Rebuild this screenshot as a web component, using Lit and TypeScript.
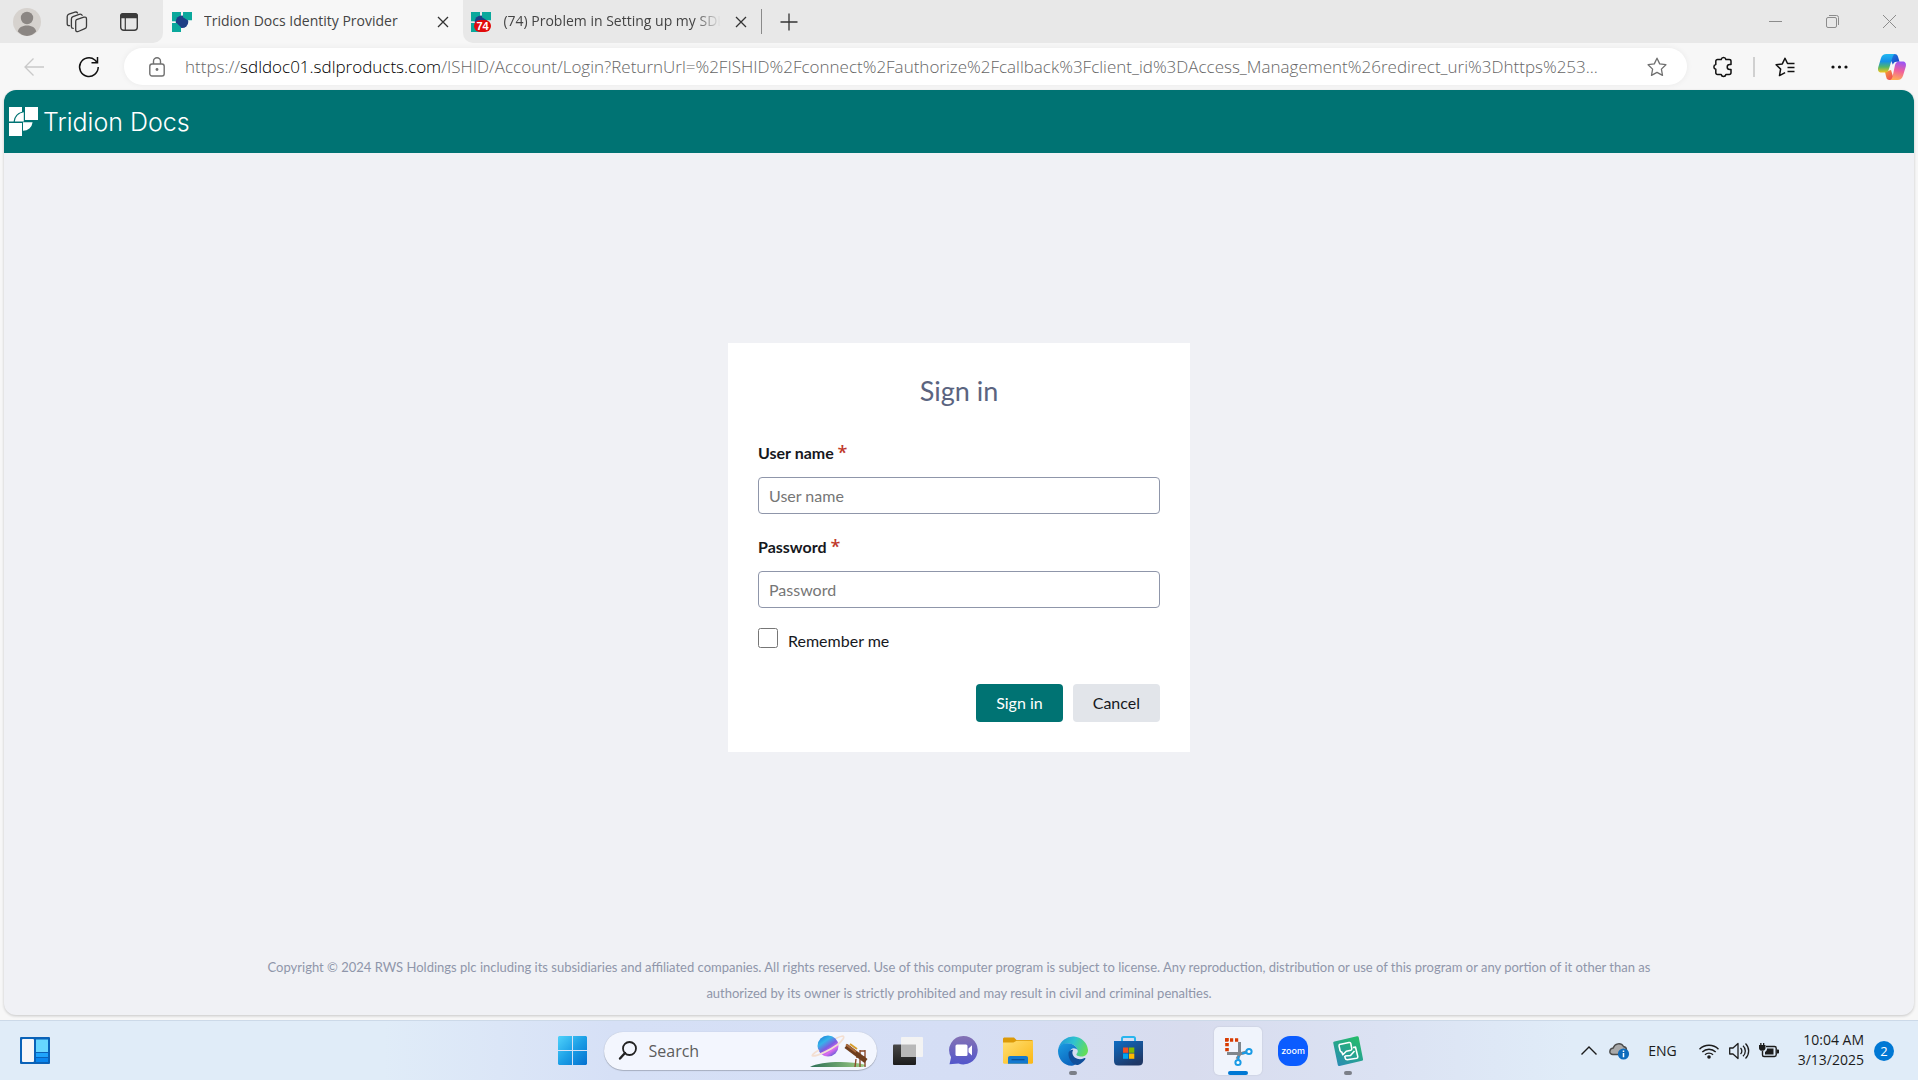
import { LitElement, html, css, svg } from "lit";
import { customElement, property } from "lit/decorators.js";

const favicon = svg`
  <path fill="#0aa89c" d="M0 0h9v9.300H0z"/>
  <circle cx="10" cy="9.700" r="6.300" fill="#1f3f86"/>
  <path fill="#0aa89c" d="M11 0h9v8.300h-4.200L11 5.200zM0 11h4.600L9 15.200V20H0z"/>`;

const icons: Record<string, { box: string; art: unknown }> = {
  avatar: {
    box: "0 0 28 28",
    art: svg`<circle cx="14" cy="14" r="14" fill="#d6d2ce"/><circle cx="14" cy="10" r="6.200" fill="#8b8683"/>
      <path fill="#8b8683" d="M4.800 23.500c.6-3.800 4.400-6 9.200-6s8.600 2.200 9.200 6A14 14 0 0 1 14 28a14 14 0 0 1-9.200-4.500z"/>`,
  },
  workspaces: {
    box: "0 0 22 22",
    art: svg`<g fill="none" stroke="#3b3b3b" stroke-width="1.300" stroke-linejoin="round" stroke-linecap="round">
      <path d="M10.500 8.700l7.300-2.500c1.600-.5 2.700.2 2.700 1.700v7.300c0 1.200-.5 2-1.700 2.500l-6.600 2.800c-1.500.5-2.500-.2-2.500-1.600v-8.100c0-1.100 0-1.700.8-2.100z"/>
      <path d="M7.200 17.400c-1.200 0-1.800-.6-1.800-1.700V8c0-1.200.5-2 1.600-2.400l6.200-2.200c1.400-.5 2.400-.1 2.900.9"/>
      <path d="M3.600 14.700C2.100 14.700 1.200 14 1.200 12.700V5.600c0-1.200.6-2 1.700-2.400l6-2c1.200-.4 2.200 0 2.700.8"/></g>`,
  },
  tabActions: {
    box: "0 0 18 18",
    art: svg`<rect x=".7" y=".7" width="16.600" height="16.600" rx="3" fill="none" stroke="#3b3b3b" stroke-width="1.400"/>
      <path fill="#3b3b3b" d="M3 0h12a3 3 0 0 1 3 3v2.200H0V3a3 3 0 0 1 3-3z"/><path d="M5.300 5v12.500" stroke="#3b3b3b" stroke-width="1.200"/>`,
  },
  favicon: { box: "0 0 20 20", art: favicon },
  close: { box: "0 0 10 10", art: svg`<path d="M0 0l10 10M10 0L0 10" stroke="#333" stroke-width="1.300"/>` },
  plus: { box: "0 0 18 18", art: svg`<path d="M9 .5v17M.5 9h17" stroke="#333" stroke-width="1.300"/>` },
  minimize: { box: "0 0 13 13", art: svg`<path d="M0 6.500h13" stroke="#8c8c8c"/>` },
  restore: {
    box: "0 0 13 13",
    art: svg`<g fill="none" stroke="#8c8c8c"><rect x=".5" y="2.500" width="10" height="10" rx="1.500"/><path d="M3 .5h7.500a2 2 0 0 1 2 2V10"/></g>`,
  },
  windowClose: { box: "0 0 13 13", art: svg`<path d="M0 0l13 13M13 0L0 13" stroke="#8c8c8c"/>` },
  back: {
    box: "0 0 20 18",
    art: svg`<path d="M20 9H1M9.500.5L1 9l8.500 8.500" fill="none" stroke="#c9c9c9" stroke-width="1.300"/>`,
  },
  refresh: {
    box: "0 0 20 20",
    art: svg`<path d="M19.200 10a9.300 9.300 0 1 1-3.300-7l2.300 2.500M18.500 0v5.700h-6" fill="none" stroke="#111" stroke-width="1.500"/>`,
  },
  lock: {
    box: "0 0 16 20",
    art: svg`<g fill="none" stroke="#707070" stroke-width="1.400"><rect x=".8" y="7" width="14.400" height="12" rx="2.200"/><path d="M4.500 7V4.200a3.500 3.500 0 0 1 7 0V7"/></g><circle cx="8" cy="12.500" r="1.400" fill="#707070"/>`,
  },
  star: {
    box: "0 0 20 20",
    art: svg`<path d="M10 1.200l2.700 5.700 6.200.8-4.500 4.400 1.100 6.300L10 15.400l-5.500 3 1.100-6.300L1.100 7.700l6.200-.8z" fill="none" stroke="#707070" stroke-width="1.300" stroke-linejoin="round"/>`,
  },
  puzzle: {
    box: "0 0 20 20",
    art: svg`<path d="M4.500 2.500h3.700a2.400 2.400 0 0 1 4.700 0h3.300c1 0 1.800.7 1.800 1.700v3.300h-1.300a2.500 2.500 0 0 0 0 5h1.300v3.300c0 1-.8 1.700-1.800 1.700h-3.300a2.400 2.400 0 0 1-4.700 0H4.500c-1 0-1.700-.8-1.700-1.700v-3.500a2.400 2.400 0 0 1 0-4.700V4.200c0-1 .7-1.700 1.700-1.700z" fill="none" stroke="#111" stroke-width="1.500" stroke-linejoin="round"/>`,
  },
  favorites: {
    box: "0 0 20 20",
    art: svg`<path d="M19.500 6.500h-7L10 1.200 7.300 6.900l-6.200.8 4.500 4.400-1.100 6.500 5.600-3M12.500 10.500h7M12.500 14.500h7" fill="none" stroke="#111" stroke-width="1.500" stroke-linejoin="round"/>`,
  },
  more: {
    box: "0 0 17 4",
    art: svg`<g fill="#111"><circle cx="2" cy="2" r="1.600"/><circle cx="8.500" cy="2" r="1.600"/><circle cx="15" cy="2" r="1.600"/></g>`,
  },
  copilot: {
    box: "0 0 28 26",
    art: svg`<defs>
        <linearGradient id="a" x1="0" y1="0" x2="0" y2="1"><stop offset="0" stop-color="#22b8f0"/><stop offset=".4" stop-color="#1591e8"/><stop offset=".7" stop-color="#52b66a"/><stop offset="1" stop-color="#f5c51c"/></linearGradient>
        <linearGradient id="b" x1=".6" y1="0" x2=".4" y2="1"><stop offset="0" stop-color="#9a55f5"/><stop offset=".5" stop-color="#f0609c"/><stop offset="1" stop-color="#ffae55"/></linearGradient>
        <linearGradient id="c" x1="0" y1="0" x2="1" y2="1"><stop offset="0" stop-color="#1e8be8"/><stop offset="1" stop-color="#1b3bc0"/></linearGradient>
        <linearGradient id="d" x1="0" y1="0" x2="1" y2="1"><stop offset="0" stop-color="#f5a13a"/><stop offset="1" stop-color="#ee3b5a"/></linearGradient></defs>
      <path fill="url(#c)" d="M10 0h6.500c2.200 0 3 1.300 3.600 3l1.400 4.700h-3c-2 0-3 1-3.600 3z"/>
      <path fill="url(#d)" d="M7 18l6-2 3 9.500c-.7.300-1.400.5-2.200.5H11.500c-2 0-2.800-1.200-3.300-3z"/>
      <path fill="url(#a)" d="M8.500 0H17c-1.500.5-2.100 2-2.600 3.500L11 15c-.7 2.200-1.800 3.500-4 3.500H3.500C.7 18.500-.5 16.500.2 13.500L3 4C3.800 1.300 5.700 0 8.500 0z"/>
      <path fill="url(#b)" d="M21 7.500h3.500c2.800 0 4 2 3.300 5L25 21.800c-.8 2.800-2.700 4.200-5.500 4.200H12c1.500-.5 2.100-2 2.600-3.500L17 11c.7-2.200 1.800-3.500 4-3.500z"/>`,
  },
  brand: {
    box: "0 0 29 29",
    art: svg`<path fill="#fff" d="M0 0h13v4.800A11.300 11.300 0 0 0 4.600 14.500H0zM16 0h13v13H16zM0 16h13v13H0z"/>
      <path fill="#fff" d="M5.800 14.500A9.800 9.800 0 0 1 14.800 5.300V14.500zM14 15.300h9.600a9.600 9.600 0 0 1-9.600 8.500z"/>`,
  },
  widgets: {
    box: "0 0 30 27",
    art: svg`<rect width="30" height="27" rx="1" fill="#0a62b8"/><rect x="2" y="2" width="12" height="23" rx="1" fill="#f6f6f8"/><path fill="#67d6ff" d="M16 2.500h12V15H16z"/><path fill="#1fa4fb" d="M16 16h12v4H16z"/><path fill="#0a86ee" d="M16 21h12v4H16z"/>`,
  },
  start: {
    box: "0 0 29 29",
    art: svg`<defs><linearGradient id="w" x1="0" y1="0" x2="1" y2="1"><stop offset="0" stop-color="#4fd2fb"/><stop offset=".5" stop-color="#1c9fe6"/><stop offset="1" stop-color="#0370cf"/></linearGradient></defs>
      <path fill="url(#w)" d="M1 0h13v14H0V1zM15 0h13l1 1v13H15zM0 15h14v14H1l-1-1zM15 15h14v13l-1 1H15z"/>`,
  },
  search: {
    box: "0 0 18 19",
    art: svg`<circle cx="10.500" cy="7.500" r="6.500" fill="none" stroke="#222" stroke-width="1.800"/><path d="M6 12l-5 5.500" stroke="#222" stroke-width="2.400" stroke-linecap="round"/>`,
  },
  space: {
    box: "0 0 58 32",
    art: svg`<defs><linearGradient id="p" x1=".1" y1="0" x2=".8" y2="1"><stop offset="0" stop-color="#1b78d6"/><stop offset=".3" stop-color="#35b4ea"/><stop offset=".55" stop-color="#7d5be0"/><stop offset=".75" stop-color="#dd6cf0"/><stop offset="1" stop-color="#4b5bd0"/></linearGradient>
      <linearGradient id="g" x1="0" x2="1"><stop offset="0" stop-color="#2b6f56"/><stop offset="1" stop-color="#a2cf84"/></linearGradient></defs>
      <path fill="url(#g)" d="M0 32c10-5 36-7 56-2l-3 2z"/><circle cx="18" cy="11" r="10.500" fill="url(#p)"/>
      <path d="M9 15C3 18.500 1 21 3 21c5 0 17-6 24-11 6-4.500 8-8.500 6-9-1.500 0-4 1-7 2.500" fill="none" stroke="#f3dfd2" stroke-width="1.700"/>
      <path d="M46 24l-1 8M50 15v17M55 15v17M46 22h9M50 16h5" stroke="#8b4a2b" stroke-width="1.400"/>
      <path d="M36 11l20 15" stroke="#6e3d1d" stroke-width="5"/><path d="M36 9.500l10 7.500" stroke="#a8683a" stroke-width="2"/><path d="M40 9l7 5" stroke="#d69d2e" stroke-width="2"/>`,
  },
  taskView: {
    box: "0 0 30 28",
    art: svg`<defs><linearGradient id="k" x1="0" y1="0" x2="0" y2="1"><stop offset="0" stop-color="#484848"/><stop offset="1" stop-color="#1c1c1c"/></linearGradient></defs>
      <rect y="7.500" width="23" height="20.500" rx="1" fill="url(#k)"/><rect x="8" width="22" height="20" rx="1" fill="#f3f3f3"/><path fill="#b8b8b8" d="M8 7.500h15V20H8z"/>`,
  },
  chat: {
    box: "0 0 29 29",
    art: svg`<defs><linearGradient id="h" x1="0" y1="0" x2="0" y2="1"><stop offset="0" stop-color="#8472b4"/><stop offset="1" stop-color="#5256cb"/></linearGradient></defs>
      <path fill="url(#h)" d="M14.500 0a14.200 14.200 0 1 1-5 27.500L.5 28.300l1.600-7A14.200 14.200 0 0 1 14.500 0z"/><rect x="6.500" y="8.500" width="12" height="11.500" rx="1.500" fill="#fff"/><path fill="#fff" d="M19.500 12.500L23 9.200v10.200l-3.500-3.200z"/>`,
  },
  folder: {
    box: "0 0 30 27",
    art: svg`<defs><linearGradient id="f" x1="0" y1="0" x2="1" y2="1"><stop offset="0" stop-color="#ffdf73"/><stop offset="1" stop-color="#fbb714"/></linearGradient></defs>
      <path fill="#dc9a08" d="M1 .5h10L13.500 3H29l1 1v6H0V1.500z"/><path fill="url(#f)" d="M0 5.500h10.500l3-1.700H30V26l-1 .8H1L0 26z"/><path fill="#1379cf" d="M5 26.800V21c0-1.300.8-2 2-2h16c1.200 0 2 .7 2 2v5.800z"/><path d="M8.500 22.700h13" stroke="#0a4d94" stroke-width="1.200"/>`,
  },
  edge: {
    box: "0 0 30 30",
    art: svg`<defs><linearGradient id="e" x1="0" y1=".2" x2="1" y2=".5"><stop offset="0" stop-color="#2296d9"/><stop offset=".5" stop-color="#2fc3cf"/><stop offset="1" stop-color="#62dd5a"/></linearGradient>
      <linearGradient id="i" x1="0" y1="0" x2=".6" y2="1"><stop offset="0" stop-color="#1b9de2"/><stop offset="1" stop-color="#0b63bd"/></linearGradient></defs>
      <path fill="url(#e)" d="M.5 12A15 15 0 0 1 30 14c0 4-2.500 6.500-6.500 6.500-3.500 0-5.500-1-5-2.500 1.200-1.200 1.600-2.700 1-4C18.500 10.500 15 7 9 7.500 5 8 2 9.500.5 12z"/>
      <path fill="url(#i)" d="M0 15c0-4.500 3.500-7.800 9-7.800 6 0 10 3.500 10.500 7-1.300-2-4.500-2.700-6.500-.7-4 4-.5 11 5.500 12.500-1 3-3.500 4-5 3.800C6 29.500 0 23.500 0 15z"/>
      <path fill="#104f9b" d="M10.500 17c-.5 7 5.500 13 9.500 12 3-1.200 5.500-3.200 7.200-5.700.6-1-.2-1.500-1.200-1-5 2.200-10.500 0-11.500-4.500-.3-1.500 0-2.800.8-4-2.700-.2-4.600 1.200-4.800 3.200z"/>`,
  },
  store: {
    box: "0 0 29 30",
    art: svg`<defs><linearGradient id="s" x1="0" y1="0" x2=".6" y2="1"><stop offset="0" stop-color="#0d6cc4"/><stop offset="1" stop-color="#1f3866"/></linearGradient></defs>
      <path d="M8 6V2.500C8 1.500 8.500 1 9.500 1h10c1 0 1.500.5 1.500 1.500V6" fill="none" stroke="#29b5ee" stroke-width="2"/><path fill="url(#s)" d="M0 5h29v20c0 3-1.500 4.500-4.500 4.500h-20C1.500 29.500 0 28 0 25z"/>
      <path fill="#f25022" d="M9 11.500h5.300v5.300H9z"/><path fill="#7fba00" d="M15 11.500h5.300v5.300H15z"/><path fill="#00a4ef" d="M9 17.500h5.300v5.300H9z"/><path fill="#ffb900" d="M15 17.500h5.300v5.300H15z"/>`,
  },
  snip: {
    box: "0 0 30 30",
    art: svg`<path d="M2 4h13.500M4 2v15" fill="none" stroke="#d83b01" stroke-width="3.600" stroke-dasharray="3.200 1.800"/><path d="M16.500 6v12.500L14 23M4 17.500h14.500l5-1.500" fill="none" stroke="#80868c" stroke-width="3"/>
      <g fill="#fff" stroke="#1a9be6" stroke-width="2"><circle cx="26" cy="15.500" r="2.600"/><circle cx="15" cy="26.500" r="2.600"/></g><path d="M19 17.500l4.500-1M15.500 20v4" stroke="#1a9be6" stroke-width="2"/>`,
  },
  ishDocs: {
    box: "0 0 30 30",
    art: svg`<defs><linearGradient id="t" x1=".8" y1="0" x2=".2" y2="1"><stop offset="0" stop-color="#24bd68"/><stop offset="1" stop-color="#2a8cb4"/></linearGradient></defs>
      <path fill="url(#t)" d="M1.500 5.500L24 .3c1-.2 1.500.1 1.700 1L30 23c.2 1-.1 1.500-1 1.800L6.500 30c-1 .2-1.500-.1-1.700-1L.3 7.200c-.2-1 .2-1.500 1.200-1.700z"/>
      <path d="M6.500 8.500l9.500-2c1-.2 1.600.2 1.800 1.200l1 5c.1.800-.3 1.400-1 1.600l-4.500 1-3.500 3.500-1-2.700c-1 0-1.500-.5-1.700-1.400l-1-4.500c-.1-.9 0-1.500.4-1.700zM20 11.500l2.500-.4 2.300 9.500c.1 1-.3 1.500-1.100 1.700l-9.500 1.500c-1.200 0-1.700-.5-1.900-1.400l-.6-2.600M12 20l5.500-.5 4-4.500" fill="none" stroke="#fff" stroke-width="1.600" stroke-linejoin="round"/>`,
  },
  chevron: { box: "0 0 16 9", art: svg`<path d="M.5 8.500L8 1l7.500 7.500" fill="none" stroke="#1c1c1c" stroke-width="1.400"/>` },
  cloud: {
    box: "0 0 20 18",
    art: svg`<path d="M4 12.500C-.5 12.500 0 6.500 4.200 6 5.500 1.500 12 0 14.500 4.500c2 .3 3 2 3 3.500v4.500z" fill="#a9a9a9" stroke="#4b4b4b" stroke-width="1.400"/><circle cx="14.500" cy="12" r="5.600" fill="#0f6cbd"/><path d="M14.500 8.500v1.500M14.500 11v4.200" stroke="#fff" stroke-width="1.500"/>`,
  },
  wifi: {
    box: "0 0 20 16",
    art: svg`<g fill="none" stroke="#1c1c1c" stroke-width="1.400"><path d="M.5 6.200a13.400 13.400 0 0 1 19 0M3.300 9a9.500 9.500 0 0 1 13.400 0M6 11.800a5.600 5.600 0 0 1 8 0"/></g><circle cx="10" cy="14" r="1.800" fill="#1c1c1c"/>`,
  },
  volume: {
    box: "0 0 20 18",
    art: svg`<path d="M.7 6h3.300L9 1.500v15L4 12H.7zM11.500 6a4 4 0 0 1 0 6M14 3.800a7 7 0 0 1 0 10.400M16.500 1.500a10.500 10.500 0 0 1 0 15" fill="none" stroke="#1c1c1c" stroke-width="1.300" stroke-linejoin="round"/>`,
  },
  battery: {
    box: "0 0 20 16",
    art: svg`<path d="M7 3.500h8.500c1 0 1.700.7 1.700 1.700v6.600c0 1-.7 1.700-1.700 1.700H5c-1 0-1.500-.4-1.500-1.500V8" fill="none" stroke="#1c1c1c" stroke-width="1.400"/><path fill="#1c1c1c" d="M8 5.500h6.500v6H6V9c1.500-.8 2-2 2-3.500zM18 6.500h1.200c.5 0 .8.300.8.800v2.400c0 .5-.3.800-.8.800H18zM0 2h1.200V0h1.300v2h1.500V0h1.300v2h1.200v3c0 1.600-1 2.500-2.500 2.700h-1.500C.8 7.500 0 6.500 0 5z"/>`,
  },
};

@customElement("ui-icon")
class UiIcon extends LitElement {
  static styles = css`
    :host { display: inline-flex; flex: none; }
    svg { display: block; overflow: visible; }
  `;
  @property() name = "close";
  render() {
    const { box, art } = icons[this.name];
    const [, , w, h] = box.split(" ");
    return html`<svg viewBox=${box} width=${w} height=${h} aria-hidden="true">${art}</svg>`;
  }
}

@customElement("browser-chrome")
class BrowserChrome extends LitElement {
  static styles = css`
    :host { display: block; font-family: "Open Sans", "Noto Sans", sans-serif; color: #444; }
    button { border: 0; padding: 0; background: none; font: inherit; color: inherit; display: flex; align-items: center; justify-content: center; }
    .strip { display: flex; background: #f7f7f7; }
    .lead { display: flex; width: 163px; height: 43px; padding-left: 3px; box-sizing: border-box; border-radius: 0 0 10px 0; background: #e8e8e8; }
    .profile { width: 48px; height: 43px; }
    .tool { width: 52px; height: 43px; }
    .tab { display: flex; align-items: center; height: 43px; padding: 0 8px; font-size: 14px; box-sizing: border-box; }
    .active { width: 300px; background: #f7f7f7; border-radius: 10px 10px 0 0; padding-left: 9px; }
    .rest { flex: 1; display: flex; align-items: center; height: 43px; background: #e8e8e8; border-radius: 0 0 0 10px; }
    .title { flex: 1; gap: 12px; min-width: 0; justify-content: flex-start; height: 34px; }
    .text { white-space: nowrap; overflow: hidden; line-height: 20px; padding-bottom: 2px; }
    .fade { width: 222px; mask-image: linear-gradient(90deg, #000 86%, transparent 98%); }
    .x { width: 24px; height: 24px; }
    .other { width: 298px; }
    .mark { display: grid; }
    .mark > * { grid-area: 1 / 1; }
    .count { align-self: end; justify-self: end; background: #e10b0b; color: #fff; border-radius: 6px; font: bold 11px/12px "Liberation Sans", sans-serif; width: 17px; text-align: center; }
    .split { width: 1px; height: 25px; background: #8a8a8a; }
    .new { width: 54px; height: 34px; }
    .controls { margin-left: auto; display: flex; }
    .controls button { width: 57px; height: 43px; }
    .bar { display: flex; align-items: center; height: 47px; background: #f7f7f7; }
    .nav { width: 54px; height: 38px; }
    .back { width: 68px; }
    .reload { width: 42px; margin-right: 14px; }
    .address { flex: 1; min-width: 0; display: flex; align-items: center; height: 37px; padding: 0 20px 0 25px; border-radius: 19px; background: #fff; box-shadow: 0 0 6px #0000000f; }
    .url { flex: 1; min-width: 0; margin: 0 12px 0 20px; font-size: 17px; font-weight: 300; line-height: 24px; white-space: nowrap; overflow: hidden; text-overflow: ellipsis; color: #666; outline: 0; }
    .host { color: #000; }
    .ext { width: 54px; margin-left: 9px; }
    .sep { width: 2px; height: 20px; background: #d0d0d0; margin: 0 3px; }
    .copilot { width: 52px; }
  `;
  render() {
    return html`
      <div class="strip">
        <div class="lead">
          <button class="profile" aria-label="Profile"><ui-icon name="avatar"></ui-icon></button>
          <button class="tool" aria-label="Workspaces"><ui-icon name="workspaces"></ui-icon></button>
          <button class="tool" aria-label="Tab actions"><ui-icon name="tabActions"></ui-icon></button>
        </div>
        <div class="tab active">
          <button class="title"><ui-icon name="favicon"></ui-icon><span class="text">Tridion Docs Identity Provider</span></button>
          <button class="x" aria-label="Close tab"><ui-icon name="close"></ui-icon></button>
        </div>
        <div class="rest">
          <div class="tab other">
            <button class="title">
              <span class="mark"><ui-icon name="favicon"></ui-icon><span class="count">74</span></span>
              <span class="text fade">(74) Problem in Setting up my SDL</span>
            </button>
            <button class="x" aria-label="Close tab"><ui-icon name="close"></ui-icon></button>
          </div>
          <span class="split"></span>
          <button class="new" aria-label="New tab"><ui-icon name="plus"></ui-icon></button>
          <div class="controls">
            <button aria-label="Minimize"><ui-icon name="minimize"></ui-icon></button>
            <button aria-label="Restore"><ui-icon name="restore"></ui-icon></button>
            <button aria-label="Close window"><ui-icon name="windowClose"></ui-icon></button>
          </div>
        </div>
      </div>
      <div class="bar">
        <button class="nav back" aria-label="Back" disabled><ui-icon name="back"></ui-icon></button>
        <button class="nav reload" aria-label="Refresh"><ui-icon name="refresh"></ui-icon></button>
        <div class="address">
          <button aria-label="Site information"><ui-icon name="lock"></ui-icon></button>
          <div class="url" role="textbox" contenteditable="true" spellcheck="false" aria-label="Address">https://<span class="host">sdldoc01.sdlproducts.com</span>/ISHID/Account/Login?ReturnUrl=%2FISHID%2Fconnect%2Fauthorize%2Fcallback%3Fclient_id%3DAccess_Management%26redirect_uri%3Dhttps%253...</div>
          <button aria-label="Add to favorites"><ui-icon name="star"></ui-icon></button>
        </div>
        <button class="nav ext" aria-label="Extensions"><ui-icon name="puzzle"></ui-icon></button>
        <span class="sep"></span>
        <button class="nav" aria-label="Favorites"><ui-icon name="favorites"></ui-icon></button>
        <button class="nav" aria-label="Settings and more"><ui-icon name="more"></ui-icon></button>
        <button class="nav copilot" aria-label="Copilot"><ui-icon name="copilot"></ui-icon></button>
      </div>
    `;
  }
}

@customElement("sign-in-page")
class SignInPage extends LitElement {
  static styles = css`
    :host { display: flex; flex-direction: column; font-family: Lato, "Liberation Sans", sans-serif; color: #16181d; background: #f0f1f5; border-radius: 12px; overflow: hidden; box-shadow: 0 1px 3px #0003; }
    .header { display: flex; align-items: center; gap: 5px; height: 63px; padding: 0 5px; background: #007373; color: #fff; }
    .product { font: 300 25px/30px Inter, Lato, sans-serif; }
    .main { flex: 1; display: flex; align-items: center; justify-content: center; padding-bottom: 12px; }
    .card { width: 402px; padding: 28px 30px 30px; background: #fff; display: flex; flex-direction: column; }
    .heading { margin: 0 0 30px; text-align: center; font-weight: 400; font-size: 27px; line-height: 40px; color: #5b6480; }
    .label { font-weight: 700; font-size: 16px; line-height: 24px; margin-bottom: 12px; }
    .required { color: #c0392b; font: 600 18px/20px "Open Sans", sans-serif; }
    .field { height: 37px; box-sizing: border-box; border: 1px solid #8f96aa; border-radius: 4px; padding: 0 10px; font: 16px/24px Lato, sans-serif; color: inherit; margin-bottom: 21px; background: #fff; }
    .field::placeholder { color: #767676; }
    .last { margin-bottom: 20px; }
    .remember { display: flex; gap: 10px; height: 20px; margin-bottom: 36px; }
    .box { width: 20px; height: 20px; margin: 0; }
    .remember-text { font-size: 16px; line-height: 26px; }
    .actions { display: flex; justify-content: flex-end; gap: 10px; }
    .button { height: 38px; padding: 0 20px; border: 0; border-radius: 4px; font: 16px/24px Lato, sans-serif; }
    .primary { background: #007373; color: #fff; }
    .secondary { background: #e2e5ea; color: #16181d; }
    .footer { padding: 0 250px 9px; text-align: center; font-size: 13px; line-height: 26px; color: #8f96aa; }
    .legal { margin: 0; }
  `;
  render() {
    return html`
      <header class="header"><ui-icon name="brand"></ui-icon><span class="product">Tridion Docs</span></header>
      <main class="main">
        <form class="card" @submit=${(e: Event) => e.preventDefault()}>
          <h1 class="heading">Sign in</h1>
          <label class="label" for="user">User name <span class="required">*</span></label>
          <input class="field" id="user" type="text" placeholder="User name" />
          <label class="label" for="password">Password <span class="required">*</span></label>
          <input class="field last" id="password" type="password" placeholder="Password" />
          <div class="remember">
            <input class="box" id="remember" type="checkbox" />
            <label class="remember-text" for="remember">Remember me</label>
          </div>
          <div class="actions">
            <button class="button primary" type="submit">Sign in</button>
            <button class="button secondary" type="button">Cancel</button>
          </div>
        </form>
      </main>
      <footer class="footer">
        <p class="legal">Copyright © 2024 RWS Holdings plc including its subsidiaries and affiliated companies. All rights reserved. Use of this computer program is subject to license. Any reproduction, distribution or use of this program or any portion of it other than as authorized by its owner is strictly prohibited and may result in civil and criminal penalties.</p>
      </footer>
    `;
  }
}

@customElement("task-bar")
class TaskBar extends LitElement {
  static styles = css`
    :host { display: grid; grid-template-columns: 1fr auto 1fr; align-items: center; height: 60px; box-sizing: border-box; border-top: 1px solid #ccd9e8; font-family: "Open Sans", "Noto Sans", sans-serif; color: #1c1c1c; background: linear-gradient(90deg, #e0ecf8 0 20%, #d6e0f6 32%, #d5def5 50%, #d8dcee 62%, #dbe2f3 72%, #e0ecf8 82%); }
    button { border: 0; padding: 0; background: none; font: inherit; color: inherit; display: flex; align-items: center; justify-content: center; }
    .left { padding-left: 20px; }
    .apps { display: flex; align-items: center; padding-left: 2px; }
    .app { width: 55px; height: 48px; display: grid; place-items: center; }
    .art { grid-area: 1 / 1; width: 48px; height: 48px; display: flex; align-items: center; justify-content: center; border-radius: 5px; }
    .app.current .art { background: #f0f4fc; box-shadow: 0 0 2px #0002; }
    .app::after { content: ""; grid-area: 1 / 1; height: 4px; border-radius: 2px; align-self: end; }
    .app.open::after { width: 8px; background: #7b7f88; }
    .app.current::after { width: 20px; background: #0078d4; }
    .slot { width: 55px; }
    .find { display: flex; align-items: center; width: 273px; height: 38px; box-sizing: border-box; border-radius: 19px; margin: 0 4px; padding-left: 15px; padding-right: 9px; background: #f3f6fe; box-shadow: 0 1px 1px #0003, 0 0 1px #0003; overflow: hidden; }
    .query { flex: 1; min-width: 0; margin-left: 12px; padding: 0; border: 0; outline: 0; background: none; font: 16px/22px "Open Sans", sans-serif; }
    .query::placeholder { color: #5c5c5c; opacity: 1; }
    .zoom { width: 30px; height: 30px; border-radius: 12px; background: #0b5cff; color: #fff; font: 500 9px/29px Inter, sans-serif; text-align: center; }
    .tray { display: flex; align-items: center; justify-content: flex-end; padding-right: 24px; }
    .gap { gap: 10px; margin: 0 19px 0 22px; }
    .chevron { margin-right: 12px; }
    .lang { font-size: 14px; margin-left: 19px; }
    .clock { flex-direction: column; align-items: flex-end; font-size: 14px; line-height: 20px; padding-bottom: 2px; }
    .badge { margin-left: 10px; width: 20px; height: 20px; border-radius: 10px; background: #0078d4; color: #fff; font-size: 13px; line-height: 20px; }
  `;
  private app(icon: string, label: string, state = "") {
    return html`<button class="app ${state}" aria-label=${label}><span class="art"><ui-icon name=${icon}></ui-icon></span></button>`;
  }
  render() {
    return html`
      <div class="left"><button aria-label="Widgets"><ui-icon name="widgets"></ui-icon></button></div>
      <div class="apps">
        ${this.app("start", "Start")}
        <label class="find">
          <ui-icon name="search"></ui-icon>
          <input class="query" type="text" placeholder="Search" aria-label="Search" />
          <ui-icon name="space"></ui-icon>
        </label>
        ${this.app("taskView", "Task view")} ${this.app("chat", "Chat")} ${this.app("folder", "File Explorer")}
        ${this.app("edge", "Microsoft Edge", "open")} ${this.app("store", "Microsoft Store")}
        <span class="slot"></span>
        ${this.app("snip", "Snipping Tool", "current")}
        <button class="app"><span class="art"><span class="zoom">zoom</span></span></button>
        ${this.app("ishDocs", "Publication Manager", "open")}
      </div>
      <div class="tray">
        <button class="chevron" aria-label="Show hidden icons"><ui-icon name="chevron"></ui-icon></button>
        <button aria-label="OneDrive"><ui-icon name="cloud"></ui-icon></button>
        <button class="lang">ENG</button>
        <button class="gap" aria-label="Network, volume and battery"><ui-icon name="wifi"></ui-icon><ui-icon name="volume"></ui-icon><ui-icon name="battery"></ui-icon></button>
        <button class="clock"><span>10:04 AM</span><span>3/13/2025</span></button>
        <button class="badge">2</button>
      </div>
    `;
  }
}

@customElement("app-root")
class AppRoot extends LitElement {
  static styles = css`
    :host { display: flex; flex-direction: column; min-height: 100vh; background: #f7f7f7; }
    .page { flex: 1; margin: 0 4px 5px; }
  `;
  render() {
    return html`<browser-chrome></browser-chrome><sign-in-page class="page"></sign-in-page><task-bar></task-bar>`;
  }
}
